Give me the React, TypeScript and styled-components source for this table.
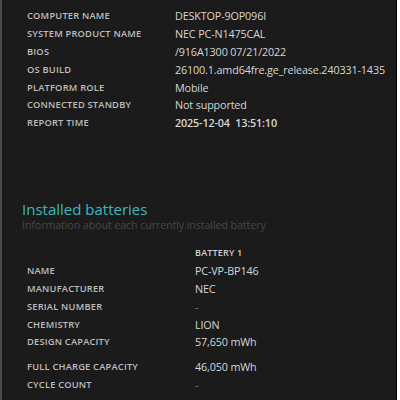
import React from "react";
import styled, { createGlobalStyle } from "styled-components";

const Global = createGlobalStyle`
  html, body { margin: 0; padding: 0; background: #ffffff; }
  body { font-family: "Open Sans", "Noto Sans", sans-serif; }
`;

const Frame = styled.div`
  width: 394px;
  height: 400px;
  box-sizing: content-box;
  background: #1b1b1b;
  border-left: 2px solid #4a4a4a;
  border-right: 1px solid #000;
  overflow: hidden;
`;

const Table = styled.div<{ $top: number }>`
  display: flex;
  flex-direction: column;
  padding: ${(p) => p.$top}px 0 0 25px;
`;

const Row = styled.div<{ $labelWidth: number; $extra?: number }>`
  display: grid;
  grid-template-columns: ${(p) => p.$labelWidth}px 1fr;
  align-items: center;
  height: 17.8px;
  margin-top: ${(p) => p.$extra ?? 0}px;
`;

const Label = styled.div`
  font-size: 9.3px;
  font-weight: 600;
  letter-spacing: 0.2px;
  color: #bdbdbd;
  text-transform: uppercase;
  white-space: nowrap;
`;

const Value = styled.div<{ $bold?: boolean; $muted?: boolean }>`
  font-size: 10.8px;
  font-weight: ${(p) => (p.$bold ? 600 : 400)};
  color: ${(p) => (p.$muted ? "#7a7a7a" : "#d6d6d6")};
  white-space: pre;
  letter-spacing: -0.15px;
`;

const SectionHead = styled.div`
  padding: 68px 0 0 20px;
`;

const Title = styled.div`
  font-size: 15px;
  font-weight: 500;
  color: #3cb9bd;
  line-height: 18px;
`;

const Subtitle = styled.div`
  font-size: 10.7px;
  color: #474747;
  line-height: 14px;
  letter-spacing: -0.1px;
`;

const ColHead = styled.div`
  font-size: 9px;
  font-weight: 600;
  color: #cfcfcf;
  letter-spacing: 0.2px;
`;

const system: [string, string, boolean?][] = [
  ["Computer name", "DESKTOP-9OP096I"],
  ["System product name", "NEC PC-N1475CAL"],
  ["BIOS", "/916A1300 07/21/2022"],
  ["OS build", "26100.1.amd64fre.ge_release.240331-1435"],
  ["Platform role", "Mobile"],
  ["Connected standby", "Not supported"],
  ["Report time", "2025-12-04  13:51:10", true],
];

const battery: [string, string, number?][] = [
  ["Name", "PC-VP-BP146"],
  ["Manufacturer", "NEC"],
  ["Serial number", "-"],
  ["Chemistry", "LION"],
  ["Design capacity", "57,650 mWh"],
  ["Full charge capacity", "46,050 mWh", 6.5],
  ["Cycle count", "-"],
];

export default function App() {
  return (
    <>
      <Global />
      <Frame>
        <Table $top={7}>
          {system.map(([l, v, b]) => (
            <Row key={l} $labelWidth={148}>
              <Label>{l}</Label>
              <Value $bold={b}>{v}</Value>
            </Row>
          ))}
        </Table>
        <SectionHead>
          <Title>Installed batteries</Title>
          <Subtitle>Information about each currently installed battery</Subtitle>
        </SectionHead>
        <Table $top={12.5}>
          <Row $labelWidth={168}>
            <span />
            <ColHead>BATTERY 1</ColHead>
          </Row>
          {battery.map(([l, v, extra]) => (
            <Row key={l} $labelWidth={168} $extra={extra}>
              <Label>{l}</Label>
              <Value $muted={v === "-"}>{v}</Value>
            </Row>
          ))}
        </Table>
      </Frame>
    </>
  );
}
